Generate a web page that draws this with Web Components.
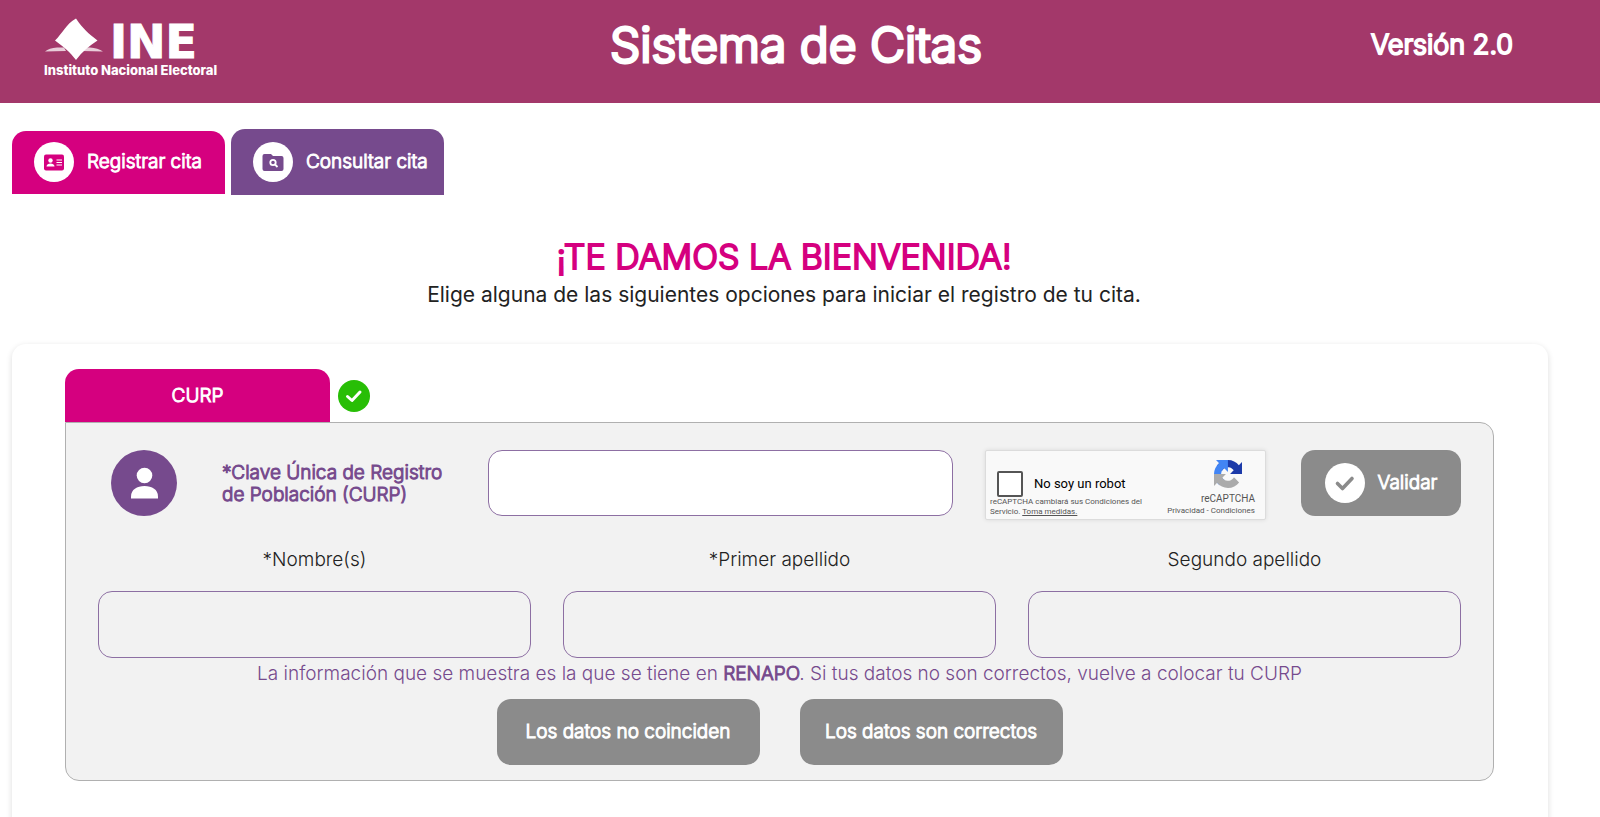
<!DOCTYPE html>
<html lang="es">
<head>
<meta charset="utf-8">
<meta name="viewport" content="width=device-width, initial-scale=1">
<title>Sistema de Citas</title>
<style>
  :root {
    --pink: #d5007f;
    --purple: #764a8d;
    --gray: #8b8b8b;
    --wine: #a3386a;
  }
  * { box-sizing: border-box; }
  body { margin: 0; background: #fff; color: #222; font-family: Inter, sans-serif; font-size: 19px; line-height: 24px; font-weight: 300; }
  main { padding: 26px 52px 0 12px; }
</style>
</head>
<body>
<site-header version="Versión 2.0">Sistema de Citas</site-header>
<main>
  <page-tabs></page-tabs>
  <welcome-title heading="¡TE DAMOS LA BIENVENIDA!">Elige alguna de las siguientes opciones para iniciar el registro de tu cita.</welcome-title>
  <form-card></form-card>
</main>

<script>
const base = '*, *::before, *::after { box-sizing: border-box; } button, input { font: inherit; color: inherit; margin: 0; } svg { display: block; flex: none; } .strong { font-weight: 300; -webkit-text-stroke: 1px currentColor; } h2.strong, .version.strong { -webkit-text-stroke-width: 2px; } h1.strong { -webkit-text-stroke-width: 3px; }';

function define(name, html, setup) {
  const tpl = document.createElement('template');
  tpl.innerHTML = html;
  customElements.define(name, class extends HTMLElement {
    constructor() {
      super();
      this.attachShadow({ mode: 'open' }).appendChild(tpl.content.cloneNode(true));
    }
    connectedCallback() { if (setup) setup(this, this.shadowRoot); }
  });
}

define('ine-logo', `
<style>${base}
  :host { display: block; color: #fff; }
  .mark { display: flex; align-items: flex-end; gap: 6px; height: 42px; }
  .mark svg { width: 60px; height: 42px; }
  .ine { font: 700 46px/36px "DejaVu Sans", sans-serif; -webkit-text-stroke: 1px #fff; }
  .name { font: 800 13px/16px Inter, sans-serif; white-space: nowrap; padding-top: 2px; }
</style>
<div class="mark">
  <svg viewBox="0 0 60 42" aria-hidden="true">
    <path fill="#fff" fill-opacity=".75" d="M1 33.500Q5 30 13 29.500L20 29.500L22 33ZM59 33.500Q54 30 46 29.500L40 29.500L38 33Z"/>
    <path fill="#fff" d="M32 0.500C39 11 45 16 53.500 22.500C45 28 38 34 32 42C26 34 20 29 11 22.500C18 16 22 6 32 0.500Z"/>
  </svg>
  <span class="ine">INE</span>
</div>
<div class="name">Instituto Nacional Electoral</div>`);

define('site-header', `
<style>${base}
  :host { display: block; background: var(--wine); color: #fff; }
  header { display: grid; grid-template-columns: 1fr auto 1fr; height: 103px; padding: 18px 52px 0 44px; }
  h1 { margin: 0; font-size: 48px; line-height: 54px; }
  .version { justify-self: end; padding-right: 35px; font-size: 27px; line-height: 54px; }
</style>
<header><ine-logo></ine-logo><h1 class="strong"><slot></slot></h1><span class="version strong"></span></header>`,
(el, root) => { root.querySelector('.version').textContent = el.getAttribute('version'); });

define('page-tabs', `
<style>${base}
  :host { display: block; }
  nav { display: flex; align-items: center; gap: 6px; }
  button { display: flex; align-items: center; width: 213px; height: 63px; gap: 13px; border: 0; padding: 0 0 0 22px; border-radius: 14px 14px 0 0; background: var(--pink); color: #fff; white-space: nowrap; }
  .query { background: var(--purple); height: 66px; }
</style>
<nav>
  <button type="button">
    <svg width="40" height="40" viewBox="0 0 40 40" aria-hidden="true"><circle cx="20" cy="20" r="20" fill="#fff"/><rect x="10" y="12.500" width="20" height="16" rx="2" fill="#d5007f"/><circle cx="16.500" cy="18.500" r="2.200" fill="#fff"/><path fill="#fff" d="M12.500 24.500c0-2 2-3 4-3s4 1 4 3z"/><path stroke="#fff" stroke-width="1.200" d="M22.500 18H28M22.500 20.500H28M22.500 23H28"/></svg>
    <span class="strong">Registrar cita</span>
  </button>
  <button type="button" class="query">
    <svg width="40" height="40" viewBox="0 0 40 40" aria-hidden="true"><circle cx="20" cy="20" r="20" fill="#fff"/><path fill="#764a8d" d="M11.500 12H18l2 2h8.500a2 2 0 0 1 2 2v11a2 2 0 0 1-2 2h-17a2 2 0 0 1-2-2V14a2 2 0 0 1 2-2z"/><circle cx="20" cy="20.500" r="2.700" fill="none" stroke="#fff" stroke-width="1.800"/><path stroke="#fff" stroke-width="1.800" d="M22 22.500l2.500 2.500"/></svg>
    <span class="strong">Consultar cita</span>
  </button>
</nav>`);

define('welcome-title', `
<style>${base}
  :host { display: block; text-align: center; padding: 39px 0 35px 8px; }
  h2 { margin: 0; color: var(--pink); font-size: 34px; line-height: 46px; }
  p { margin: 0; padding-top: 1px; font-size: 21px; line-height: 28px; font-weight: 400; }
</style>
<h2 class="strong"></h2><p><slot></slot></p>`,
(el, root) => { root.querySelector('h2').textContent = el.getAttribute('heading'); });

define('captcha-box', `
<style>${base}
  :host { display: flex; justify-content: space-between; width: 281px; height: 70px; background: #f9f9f9; border: 1px solid #dcdcdc; border-radius: 2px; box-shadow: 0 0 4px rgba(0,0,0,.1); color: #555; font: 400 8px/10px Roboto, sans-serif; flex: none; }
  .left { width: 166px; padding: 20px 0 0 4px; }
  label { display: flex; align-items: center; gap: 11px; padding-left: 7px; height: 26px; font-size: 13px; line-height: 16px; color: #000; }
  input { appearance: none; flex: none; width: 26px; height: 26px; border: 2px solid #555; border-radius: 2px; background: #fff; }
  a { color: inherit; }
  .right { display: flex; flex-direction: column; align-items: center; padding: 9px 10px 0 0; }
  .brand { font-size: 10px; line-height: 12px; padding: 5px 0 0 34px; }
  svg { margin-left: 34px; }
  .terms { white-space: nowrap; line-height: 12px; }
  .terms a { text-decoration: none; }
  .notice { white-space: nowrap; }
</style>
<div class="left">
  <label><input type="checkbox">No soy un robot</label>
  <div class="notice">reCAPTCHA cambiará sus Condiciones del<br>Servicio. <a href="#medidas">Toma medidas.</a></div>
</div>
<div class="right">
  <svg width="28" height="28" viewBox="0 0 64 64" aria-hidden="true">
    <path fill="#1c3aa9" d="M64 31.955l-.033-1.370V4.687l-7.160 7.160C50.948 4.674 42.033.093 32.050.093c-10.400 0-19.622 4.960-25.458 12.640l11.736 11.860a15.550 15.550 0 0 1 4.754-5.334c2.050-1.600 4.952-2.906 8.968-2.906.485 0 .860.057 1.135.163 4.976.393 9.288 3.140 11.828 7.124l-8.307 8.307L64 31.953"/>
    <path fill="#4285f4" d="M31.862.094l-1.370.033H4.594l7.160 7.160C4.580 13.147 0 22.060 0 32.046c0 10.400 4.960 19.622 12.640 25.458L24.500 45.768a15.550 15.550 0 0 1-5.334-4.754c-1.600-2.050-2.906-4.952-2.906-8.968 0-.485.057-.860.163-1.135.393-4.976 3.140-9.288 7.124-11.828l8.307 8.307L31.860.095"/>
    <path fill="#ababab" d="M.001 32.045l.033 1.370v25.898l7.160-7.160c5.860 7.173 14.774 11.754 24.760 11.754 10.400 0 19.622-4.960 25.458-12.640l-11.736-11.860a15.550 15.550 0 0 1-4.754 5.334c-2.050 1.600-4.952 2.906-8.968 2.906-.485 0-.860-.057-1.135-.163-4.976-.393-9.288-3.140-11.828-7.124l8.307-8.307c-10.522.040-22.400.066-27.295-.005"/>
  </svg>
  <div class="brand">reCAPTCHA</div>
  <div class="terms"><a href="#privacidad">Privacidad</a> - <a href="#condiciones">Condiciones</a></div>
</div>`);

define('gray-button', `
<style>${base}
  :host { display: block; flex: none; width: 263px; }
  button { display: flex; align-items: center; justify-content: center; gap: 13px; width: 100%; height: 66px; padding: 0; border: 0; border-radius: 14px; background: var(--gray); color: #fff; white-space: nowrap; }
</style>
<button type="button"><slot name="icon"></slot><span class="strong"><slot></slot></span></button>`);

define('text-field', `
<style>${base}
  :host { display: block; }
  label { display: block; text-align: center; padding-bottom: 19px; }
  input { display: block; width: 100%; height: 67px; padding: 0 16px; border: 1px solid #8d6fa3; border-radius: 14px; background: transparent; }
</style>
<label for="field"><slot></slot></label><input id="field" type="text" readonly>`);

define('curp-panel', `
<style>${base}
  :host { display: block; }
  .tabs { display: flex; align-items: center; gap: 8px; }
  .tab { width: 265px; height: 53px; border: 0; border-radius: 14px 14px 0 0; background: var(--pink); color: #fff; }
  .panel { border: 1px solid #b0b0b0; border-radius: 0 14px 14px 14px; background: #f2f2f2; padding: 27px 32px 15px; }
  .curp { display: flex; align-items: flex-start; }
  .person { margin: 0 45px 0 13px; }
  .curp label { width: 266px; padding-top: 12px; color: var(--purple); line-height: 22px; }
  .curp input { flex: 1; min-width: 0; height: 66px; padding: 0 16px; border: 1px solid #8d6fa3; border-radius: 14px; background: #fff; }
  captcha-box { margin: 0 35px 0 32px; }
  .curp gray-button { width: 160px; }
  .names { display: grid; grid-template-columns: repeat(3, 1fr); gap: 32px; padding-top: 28px; }
  .info { margin: 0; padding: 4px 0 13px; text-align: center; color: var(--purple); }
  .actions { display: flex; justify-content: center; gap: 40px; }
</style>
<div class="tabs">
  <button type="button" class="tab"><span class="strong">CURP</span></button>
  <svg width="32" height="32" viewBox="0 0 32 32" aria-hidden="true"><circle cx="16" cy="16" r="16" fill="#28be06"/><path d="M9.500 16.500l4.500 4 8-8.500" fill="none" stroke="#fff" stroke-width="3" stroke-linecap="round" stroke-linejoin="round"/></svg>
</div>
<div class="panel">
  <div class="curp">
    <svg class="person" width="66" height="66" viewBox="0 0 66 66" aria-hidden="true"><circle cx="33" cy="33" r="33" fill="#764a8d"/><circle cx="33.500" cy="25.500" r="7.800" fill="#fff"/><path fill="#fff" d="M20 48.500v-2c0-7 6-10.500 13.500-10.500S47 39.500 47 46.500v2z"/></svg>
    <label for="curp" class="strong">*Clave Única de Registro<br>de Población (CURP)</label>
    <input id="curp" type="text">
    <captcha-box></captcha-box>
    <gray-button><svg slot="icon" width="40" height="40" viewBox="0 0 40 40" aria-hidden="true"><circle cx="20" cy="20" r="20" fill="#fff"/><path d="M12.500 20.500l5 5 9.500-10" fill="none" stroke="#8b8b8b" stroke-width="3.600" stroke-linecap="round" stroke-linejoin="round"/></svg>Validar</gray-button>
  </div>
  <div class="names">
    <text-field>*Nombre(s)</text-field>
    <text-field>*Primer apellido</text-field>
    <text-field>Segundo apellido</text-field>
  </div>
  <p class="info">La información que se muestra es la que se tiene en <b class="strong">RENAPO</b>. Si tus datos no son correctos, vuelve a colocar tu CURP</p>
  <div class="actions">
    <gray-button>Los datos no coinciden</gray-button>
    <gray-button>Los datos son correctos</gray-button>
  </div>
</div>`);

define('form-card', `
<style>${base}
  :host { display: block; border-radius: 14px 14px 0 0; box-shadow: 0 2px 6px rgba(0,0,0,.14); padding: 25px 54px 48px 53px; }
</style>
<curp-panel></curp-panel>`);
</script>
</body>
</html>
